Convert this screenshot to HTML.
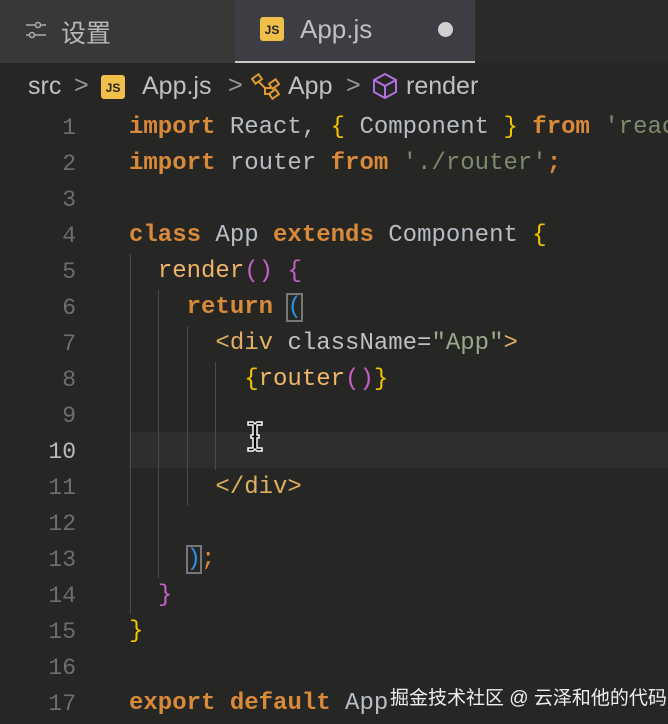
<!DOCTYPE html>
<html><head><meta charset="utf-8"><style>
*{margin:0;padding:0;box-sizing:border-box}
body{width:668px;height:724px;overflow:hidden;background:#262625;font-family:"Liberation Sans","Noto Sans CJK SC",sans-serif;position:relative}
.tabs{position:absolute;left:0;top:0;width:668px;height:63px;background:#363636}
.t1{position:absolute;left:0;top:0;width:235px;height:63px;background:#383838}
.t2{position:absolute;left:235px;top:0;width:240px;height:63px;background:#3d3d44;border-bottom:2px solid #c8c8c8}
.t3{position:absolute;left:475px;top:0;width:193px;height:63px;background:#2b2b2a}
.crumb{position:absolute;left:0;top:63px;width:668px;height:47px;background:#262625;color:#c0c0c0;font-size:25px}
.js{display:inline-block;width:24px;height:24px;background:#f0c04a;border-radius:3px;color:#222;font-size:12px;font-weight:bold;text-align:center;line-height:26px}
.code{position:absolute;left:0;top:110px;width:668px;height:614px;overflow:hidden;font-family:"Liberation Mono",monospace;font-size:24px;white-space:pre}
.ln{position:absolute;left:0;width:76px;text-align:right;color:#6e6e6e;height:36px;line-height:36px;font-size:23px}
.l{position:absolute;left:129px;height:36px;line-height:36px;color:#b8bcc4}
.k{color:#d88a3a;font-weight:bold}.s{color:#7d8a6c}.y{color:#f4c400}.p{color:#c660c6}.f{color:#efb66a}.b{color:#2f8ee0}.tg{color:#e0b060}.tx{color:#c0c0c0}
.g{position:absolute;width:1px;background:#4a4a4a}
</style></head><body>
<div class="tabs"><div class="t1"></div><div class="t2"></div><div class="t3"></div></div>
<svg style="position:absolute;left:25px;top:18px" width="22" height="24" viewBox="0 0 22 24" fill="none" stroke="#aaa" stroke-width="1.6"><line x1="1" y1="7" x2="21" y2="7"/><circle cx="13" cy="7" r="2.5" fill="#383838"/><line x1="1" y1="17" x2="21" y2="17"/><circle cx="7" cy="17" r="2.5" fill="#383838"/></svg>
<div style="position:absolute;left:61px;top:14px;font-size:25px;color:#b8b8b8">设置</div>
<span class="js" style="position:absolute;left:260px;top:17px">JS</span>
<div style="position:absolute;left:300px;top:14px;font-size:26px;color:#c0c0c0">App.js</div>
<div style="position:absolute;left:438px;top:22px;width:15px;height:15px;border-radius:50%;background:#d0d0d0"></div>
<div class="crumb">
<span style="position:absolute;left:28px;top:9px">src</span>
<span style="position:absolute;left:74px;top:8px;color:#999">&gt;</span>
<span class="js" style="position:absolute;left:101px;top:12px">JS</span>
<span style="position:absolute;left:142px;top:9px">App.js</span>
<span style="position:absolute;left:228px;top:8px;color:#999">&gt;</span>
<svg style="position:absolute;left:251px;top:10px" width="30" height="28" viewBox="0 0 30 28" fill="none" stroke="#e09a30" stroke-width="2"><rect x="2" y="3" width="8" height="6" transform="rotate(-35 6 6)"/><rect x="19" y="8" width="8" height="6" transform="rotate(-35 23 11)"/><rect x="19" y="18" width="8" height="6" transform="rotate(-35 23 21)"/><path d="M8 9 L14 15 H20 M14 15 V21 H20"/></svg>
<span style="position:absolute;left:288px;top:9px">App</span>
<span style="position:absolute;left:346px;top:8px;color:#999">&gt;</span>
<svg style="position:absolute;left:371px;top:9px" width="28" height="28" viewBox="0 0 28 28" fill="none" stroke="#b070e0" stroke-width="2"><path d="M14 2 L25 8 V20 L14 26 L3 20 V8 Z M3 8 L14 14 L25 8 M14 14 V26"/></svg>
<span style="position:absolute;left:406px;top:9px">render</span>
</div>
<div style="position:absolute;left:129px;top:432px;width:539px;height:36px;background:#2e2e2d"></div>
<div class="g" style="left:130px;top:254px;height:360px"></div>
<div class="g" style="left:158px;top:290px;height:288px"></div>
<div class="g" style="left:187px;top:326px;height:180px"></div>
<div class="g" style="left:215px;top:362px;height:108px"></div>
<div class="code">
<div class="ln" style="top:0">1</div><div class="ln" style="top:36px">2</div><div class="ln" style="top:72px">3</div><div class="ln" style="top:108px">4</div><div class="ln" style="top:144px">5</div><div class="ln" style="top:180px">6</div><div class="ln" style="top:216px">7</div><div class="ln" style="top:252px">8</div><div class="ln" style="top:288px">9</div><div class="ln" style="top:324px;color:#bbb">10</div><div class="ln" style="top:360px">11</div><div class="ln" style="top:396px">12</div><div class="ln" style="top:432px">13</div><div class="ln" style="top:468px">14</div><div class="ln" style="top:504px">15</div><div class="ln" style="top:540px">16</div><div class="ln" style="top:576px">17</div>
<div class="l" style="top:0"><span class="k">import</span> React, <span class="y">{</span> Component <span class="y">}</span> <span class="k">from</span> <span class="s">'react'</span></div>
<div class="l" style="top:36px"><span class="k">import</span> router <span class="k">from</span> <span class="s">'./router'</span><span class="k">;</span></div>
<div class="l" style="top:108px"><span class="k">class</span> App <span class="k">extends</span> Component <span class="y">{</span></div>
<div class="l" style="top:144px">  <span class="f">render</span><span class="p">()</span> <span class="p">{</span></div>
<div class="l" style="top:180px">    <span class="k">return</span> <span class="b" style="outline:2px solid #777;outline-offset:-1px">(</span></div>
<div class="l" style="top:216px">      <span class="tg">&lt;div</span> <span class="tx">className=</span><span class="s" style="color:#9aa88a">"App"</span><span class="tg">&gt;</span></div>
<div class="l" style="top:252px">        <span class="y">{</span><span class="f">router</span><span class="p">()</span><span class="y">}</span></div>
<div class="l" style="top:360px">      <span class="tg">&lt;/div&gt;</span></div>
<div class="l" style="top:432px">    <span class="b" style="outline:2px solid #777;outline-offset:-1px">)</span><span class="k" style="font-weight:normal">;</span></div>
<div class="l" style="top:468px">  <span class="p">}</span></div>
<div class="l" style="top:504px"><span class="y">}</span></div>
<div class="l" style="top:576px"><span class="k">export</span> <span class="k">default</span> App</div>
</div>
<svg style="position:absolute;left:245px;top:420px" width="20" height="34" viewBox="0 0 20 34"><path d="M3 2 H8 L10 4 L12 2 H17 V5 H12 V15 H14 V18 H12 V28 H17 V31 H12 L10 29 L8 31 H3 V28 H8 V18 H6 V15 H8 V5 H3 Z" fill="#000" stroke="#fff" stroke-width="1.5"/></svg>
<div style="position:absolute;left:390px;top:683px;font-size:19px;color:#eee">掘金技术社区 @ 云泽和他的代码</div>
</body></html>
